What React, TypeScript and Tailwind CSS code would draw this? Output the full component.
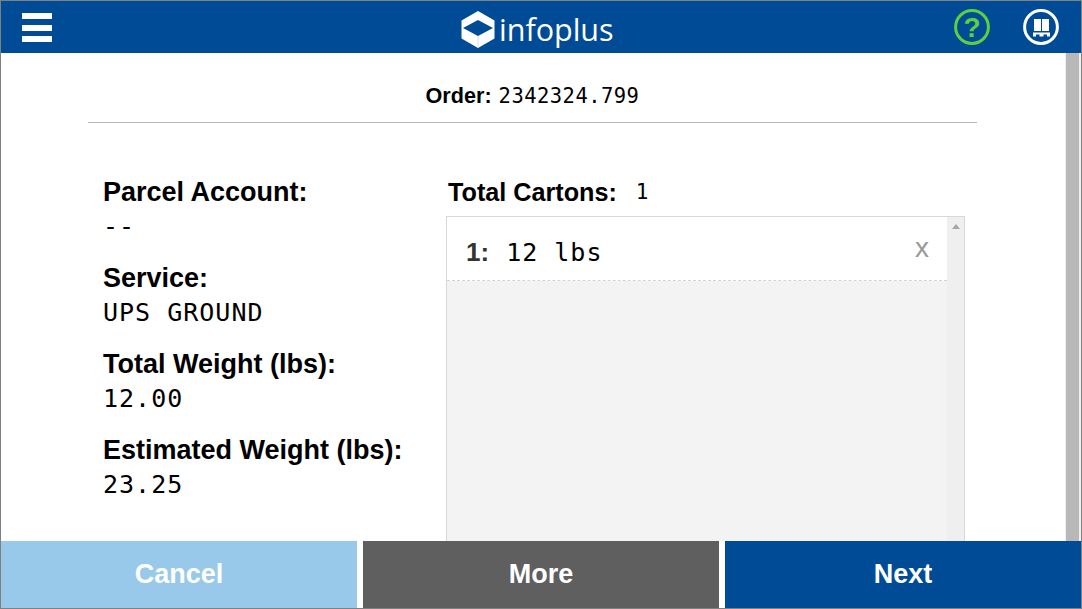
const sans = "font-['Liberation_Sans',Arial,sans-serif]";

const Field = ({ label, value }: { label: string; value: string }) => (
  <div className="mb-[19px]">
    <div className="text-[27px] leading-[32px] font-bold text-black">{label}</div>
    <div className="mt-[3px] font-['DejaVu_Sans_Mono',monospace] text-[25px] leading-[32px] tracking-[1px] text-black">{value}</div>
  </div>
);

const LogoMark = () => (
  <svg width="34" height="37" viewBox="0 0 34 37">
    <path d="M17 0 L33.5 9.5 V27.5 L17 37 L0.5 27.5 V9.5 Z" fill="#fff" />
    <path d="M17 9 L32 17 L17 25 L2 17 Z" fill="#004b96" />
    <path d="M17 25 V37" stroke="#c4d6e8" strokeWidth="0.8" />
  </svg>
);

const PalletIcon = () => (
  <svg width="36" height="36" viewBox="0 0 36 36" fill="none">
    <circle cx="18" cy="18" r="16.4" stroke="#fff" strokeWidth="3" />
    <path d="M11 10h7v12h-7zM19 10h7v12h-7z" fill="#fff" />
    <path d="M10 23.5h17v2H10zM10 25.5h3v2h-3zM16.5 25.5h4v2h-4zM24 25.5h3v2h-3z" fill="#fff" />
  </svg>
);

const App = () => {
  return (
    <div className={`flex h-[609px] w-[1082px] flex-col overflow-hidden border border-[#808080] bg-white ${sans}`}>
      {/* Header */}
      <header className="relative flex h-[52px] shrink-0 items-center justify-between bg-[#004b96] pl-[21px] pr-[22px]">
        <div className="flex w-[30px] flex-col">
          <div className="h-[6px] bg-white" />
          <div className="mt-[6px] h-[6px] bg-white" />
          <div className="mt-[5px] h-[6px] bg-white" />
        </div>
        <div className="absolute left-[460px] top-[10px] flex items-center gap-[4px]">
          <LogoMark />
          <span className="font-['Open_Sans',sans-serif] text-[30.5px] leading-[37px] text-white">infoplus</span>
        </div>
        <div className="flex items-center gap-[33px]">
          <svg width="36" height="36" viewBox="0 0 36 36" fill="none">
            <circle cx="18" cy="18" r="16.4" stroke="#5cd13f" strokeWidth="3" />
            <text x="18" y="28" textAnchor="middle" fill="#5cd13f" fontFamily="Liberation Sans" fontWeight="700" fontSize="28">?</text>
          </svg>
          <PalletIcon />
        </div>
      </header>

      {/* Body */}
      <div className="flex min-h-0 flex-1">
        <main className="flex min-w-0 flex-1 flex-col pl-[87px] pr-[88px]">
          <div className="flex h-[70px] shrink-0 items-center justify-center border-b border-[#b8b8b8] pt-[18px] text-black">
            <span className="text-[21.6px] font-bold">Order:</span>
            <span className="ml-[7px] font-['DejaVu_Sans_Mono',monospace] text-[20.5px] tracking-[0.46px]">2342324.799</span>
          </div>
          <div className="flex min-h-0 flex-1 pt-[53px]">
            <div className="w-[358px] shrink-0 pl-[15px]">
              <Field label="Parcel Account:" value="--" />
              <Field label="Service:" value="UPS GROUND" />
              <Field label="Total Weight (lbs):" value="12.00" />
              <Field label="Estimated Weight (lbs):" value="23.25" />
            </div>
            <div className="flex min-h-0 w-[519px] flex-col">
              <div className="-mt-px flex h-[41px] shrink-0 items-center pl-[2px] pb-[6px] text-black">
                <span className="text-[25.2px] font-bold">Total Cartons:</span>
                <span className="ml-[19px] font-['DejaVu_Sans_Mono',monospace] text-[21px]">1</span>
              </div>
              <div className="flex min-h-0 flex-1 border-x border-t border-[#d8d8d8] bg-[#f3f3f3]">
                <div className="flex-1">
                  <div className="flex h-[64px] items-center justify-between border-b border-dashed border-[#d4d4d4] bg-white pl-[19px] pr-[18px]">
                    <span className="flex items-center pt-[8px]">
                      <span className="text-[26px] font-bold text-[#333]">1:</span>
                      <span className="ml-[17px] font-['DejaVu_Sans_Mono',monospace] text-[25px] tracking-[1px] text-black">12 lbs</span>
                    </span>
                    <span className="pb-[1px] text-[28px] text-[#999]">x</span>
                  </div>
                </div>
                <div className="flex w-[17px] shrink-0 justify-center bg-[#efefef] pt-[7px]">
                  <div className="h-0 w-0 border-x-[4px] border-b-[5px] border-x-transparent border-b-[#a6a6a6]" />
                </div>
              </div>
            </div>
          </div>
        </main>
        <div className="w-[16px] shrink-0 border-l border-r-2 border-[#f0f0f0] bg-[#b8b8b8]" />
      </div>

      {/* Footer */}
      <footer className="flex h-[67px] shrink-0 gap-[6px] bg-white text-[27px] font-bold text-white">
        <button className="flex-1 bg-[#99c9ea]">Cancel</button>
        <button className="flex-1 bg-[#5f5f5f]">More</button>
        <button className="flex-1 bg-[#004b96]">Next</button>
      </footer>
    </div>
  );
};

export default App;
